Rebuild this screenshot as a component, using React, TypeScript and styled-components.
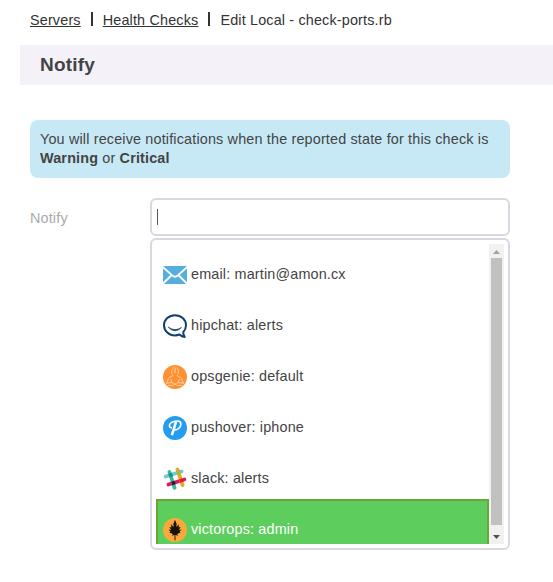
import React from "react";
import styled, { createGlobalStyle } from "styled-components";

const GlobalStyle = createGlobalStyle`
  * { box-sizing: border-box; }
  body {
    margin: 0;
    overflow: hidden;
    background: #fff;
    color: #444;
    font: 14.4px/19px "Liberation Sans", Arial, sans-serif;
    letter-spacing: 0.16px;
  }
`;

const Page = styled.main`
  height: 582px;
  padding-top: 10px;
`;

const Breadcrumbs = styled.nav`
  display: flex;
  align-items: center;
  height: 20px;
  padding-left: 30px;
  color: #333;
  white-space: nowrap;
`;

const Crumb = styled.a`
  color: inherit;
  text-decoration: underline;
`;

const Divider = styled.span`
  width: 2px;
  height: 14px;
  margin: 0 10px;
  background: #333;
  transform: translateY(-1px);
`;

const SectionTitle = styled.h2`
  height: 40px;
  margin: 15px 0 0 20px;
  padding-left: 20px;
  background: #f4f1f9;
  font-size: 19px;
  line-height: 40px;
  letter-spacing: 0.2px;
`;

const Notice = styled.p`
  width: 480px;
  height: 58px;
  margin: 35px 0 0 30px;
  padding: 10px;
  border-radius: 8px;
  background: #c7e9f5;
`;

const Field = styled.div`
  display: grid;
  grid-template-columns: 120px 360px;
  margin: 20px 0 0 30px;
`;

const Label = styled.label`
  color: #aaa;
  line-height: 40px;
`;

const Control = styled.div`
  display: grid;
  row-gap: 2px;
`;

const Input = styled.div`
  display: flex;
  align-items: center;
  height: 38px;
  padding-left: 5px;
  border: 2px solid #d9d8e0;
  border-radius: 6px;
`;

const Caret = styled.span`
  width: 1px;
  height: 16px;
  background: #555;
`;

const Dropdown = styled.div`
  display: flex;
  height: 312px;
  padding: 4px;
  border: 2px solid #d9d8e0;
  border-radius: 6px;
`;

const Options = styled.ul`
  flex: 1;
  height: 300px;
  margin: 0;
  padding: 0;
  overflow: hidden;
  list-style: none;
`;

const Option = styled.li<{ $active?: boolean }>`
  display: flex;
  gap: 4px;
  height: 51px;
  padding: 17px 5px 0;
  border: 2px solid ${(p) => (p.$active ? "#6ea537" : "transparent")};
  background: ${(p) => (p.$active ? "#5dce5d" : "transparent")};
  color: ${(p) => (p.$active ? "#fff" : "#444")};
  line-height: 22px;
  white-space: nowrap;

  svg { flex: none; }
`;

const Scrollbar = styled.div`
  display: flex;
  flex-direction: column;
  align-items: center;
  width: 15px;
  height: 300px;
  background: #f1f1f1;
`;

const ArrowSlot = styled.span`
  display: flex;
  height: 14px;
`;

const Thumb = styled.span`
  width: 11px;
  height: 267px;
  background: #c1c1c1;
`;

const EmailIcon = () => (
  <svg width="24" height="24" viewBox="0 0 24 24">
    <rect y="3" width="24" height="18" rx="1.5" fill="#54aede" />
    <path d="M0 4.2 9.2 12.4Q12 15 14.8 12.4L24 4.2M0 20.5 8.5 12.2M24 20.5l-8.5-8.3" fill="none" stroke="#fff" strokeWidth="1.9" />
  </svg>
);

const HipchatIcon = () => (
  <svg width="24" height="24" viewBox="0 0 24 24" fill="none" stroke="#13406f" strokeLinecap="round" strokeLinejoin="round">
    <path d="M20.2 18.2C22 16.3 23 14 23 11.2 23 5.5 18 1.2 12 1.2S1 5.5 1 11.2s5 10.2 11 10.2c1.6 0 3.1-.3 4.5-.9 1.5 1.5 3.2 2.3 5.2 2.4-1-1.3-1.5-2.8-1.5-4.7Z" strokeWidth="2" />
    <path d="M5.6 13.3c3.5 4.6 9.3 4.6 12.8 0-3.8 3-9 3-12.8 0Z" fill="#13406f" strokeWidth=".7" />
  </svg>
);

const OpsgenieIcon = () => (
  <svg width="24" height="24" viewBox="0 0 24 24">
    <circle cx="12" cy="12" r="12" fill="#ff9132" />
    <g fill="none" stroke="#ffe2c5" strokeWidth=".75" strokeLinecap="round">
      <path d="M9.2 9C7.8 6.4 8.8 3.6 11.5 2.3M14.8 9c1.2-2.3.8-4.6-.6-6M12.7 3.5 11.2 5.6l1.3.3-.8 2" />
      <path d="M9.8 10.5c0 1.2-3.7 1.2-4.3 2.8L4 17.4M14.2 10.5c0 1.2 3.7 1.2 4.3 2.8l1.5 4.1M7.8 14.5l.8 2.7M16.2 14.5l-.8 2.7" />
      <path d="M3.5 18.3c3.8-1.2 7-.6 8.5.9 1.5-1.5 4.7-2.1 8.5-.9M5.6 20.3c2 .7 4 .5 6.4-1.1 2.4 1.6 4.4 1.8 6.4 1.1" />
    </g>
  </svg>
);

const PushoverIcon = () => (
  <svg width="24" height="24" viewBox="0 0 24 24">
    <circle cx="12" cy="12" r="12" fill="#249df1" />
    <g fill="none" stroke="#fff">
      <path d="M13 5.8 8.9 19.2" strokeWidth="2.5" />
      <path d="M8.3 11.8C5.7 11.2 5.8 8.4 8.3 6.7c3.8-2.5 9.6-2.4 9.6 1.2 0 3.3-3.1 6.2-6.4 6" strokeWidth="1.6" strokeLinecap="round" />
    </g>
  </svg>
);

const SlackIcon = () => (
  <svg width="24" height="24" viewBox="0 0 24 24" strokeWidth="3.7" strokeLinecap="round">
    <path d="M2.6 9.6 18.6 4.4" stroke="#70cadb" />
    <path d="M5.4 17.6 21.4 12.4" stroke="#e01765" />
    <path d="m6.4 5 5.2 15.8" stroke="#3eb890" />
    <path d="m14.4 2.4 5.2 15.8" stroke="#e9a820" />
    <g strokeLinecap="butt">
      <path d="m6 8.5 3.5-1.1" stroke="#1c9285" />
      <path d="m14 5.9 3.5-1.1" stroke="#a3b65d" />
      <path d="m8.6 16.6 3.5-1.1" stroke="#361238" />
      <path d="m16.6 14 3.5-1.1" stroke="#d52027" />
    </g>
  </svg>
);

const VictoropsIcon = () => (
  <svg width="24" height="24" viewBox="0 0 24 24">
    <circle cx="12" cy="12" r="12" fill="#fba93b" />
    <path d="m12 1.8 1.7 4.3-.5 3 2.9-2.8-.5 3.3 2.1-.6-1.9 3.1 2.7-.5-2 2.2 1.2.8-3.6 1.4 1.1 1.7-2.8-.6.1 5.2h-1l.1-5.2-2.8.6 1.1-1.7-3.6-1.4 1.2-.8-2-2.2 2.7.5-1.9-3.1 2.1.6-.5-3.3 2.9 2.8-.5-3Z" fill="#17130b" />
  </svg>
);

const channels = [
  { name: "email: martin@amon.cx", Icon: EmailIcon },
  { name: "hipchat: alerts", Icon: HipchatIcon },
  { name: "opsgenie: default", Icon: OpsgenieIcon },
  { name: "pushover: iphone", Icon: PushoverIcon },
  { name: "slack: alerts", Icon: SlackIcon },
  { name: "victorops: admin", Icon: VictoropsIcon, active: true },
];

export default function App() {
  return (
    <Page>
      <GlobalStyle />
      <Breadcrumbs>
        <Crumb>Servers</Crumb>
        <Divider />
        <Crumb>Health Checks</Crumb>
        <Divider />
        <span>Edit Local - check-ports.rb</span>
      </Breadcrumbs>
      <SectionTitle>Notify</SectionTitle>
      <Notice>
        You will receive notifications when the reported state for this check is <b>Warning</b> or <b>Critical</b>
      </Notice>
      <Field>
        <Label>Notify</Label>
        <Control>
          <Input><Caret /></Input>
          <Dropdown>
            <Options>
              {channels.map(({ name, Icon, active }) => (
                <Option key={name} $active={active}>
                  <Icon />
                  <span>{name}</span>
                </Option>
              ))}
            </Options>
            <Scrollbar>
              <ArrowSlot>
                <svg width="7" height="14" viewBox="0 0 7 14"><path d="M0 10 3.5 6 7 10Z" fill="#a3a3a3" /></svg>
              </ArrowSlot>
              <Thumb />
              <ArrowSlot>
                <svg width="7" height="14" viewBox="0 0 7 14"><path d="M0 10h7L3.5 14Z" fill="#505050" /></svg>
              </ArrowSlot>
            </Scrollbar>
          </Dropdown>
        </Control>
      </Field>
    </Page>
  );
}
